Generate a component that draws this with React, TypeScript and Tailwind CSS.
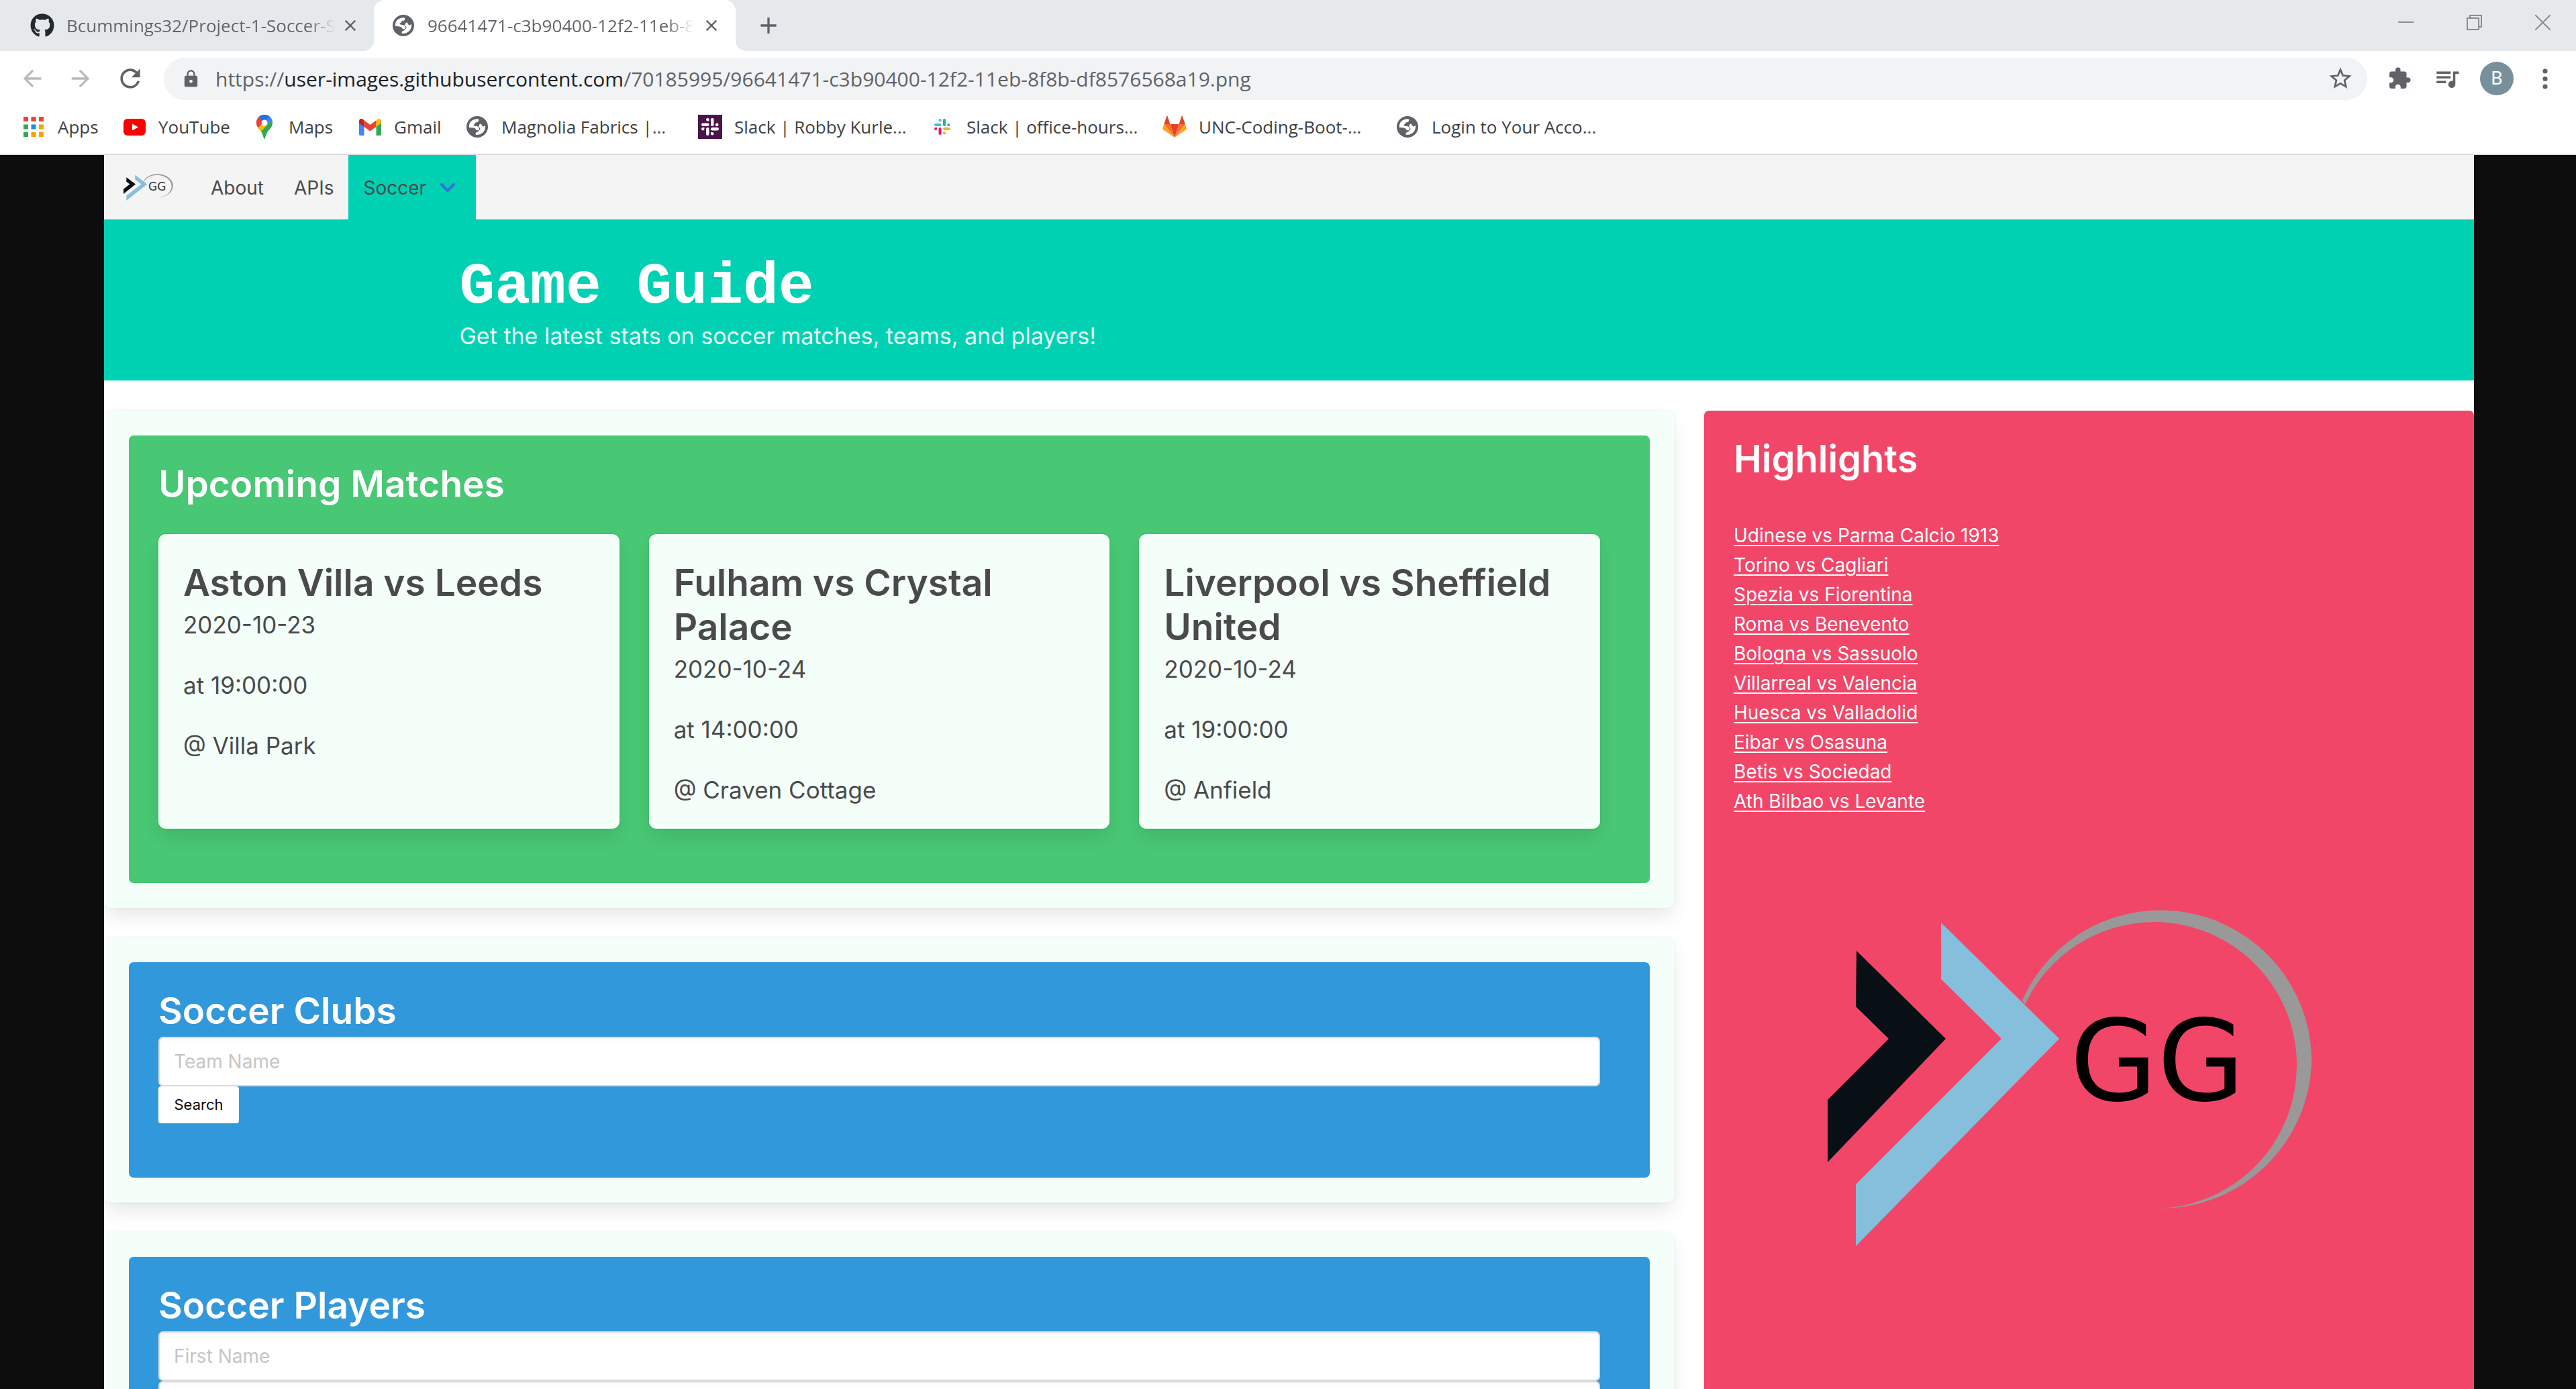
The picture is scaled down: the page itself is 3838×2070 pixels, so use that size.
import React from "react";
import { FaGithub } from "react-icons/fa";
import {
  MdQueueMusic,
  MdStarOutline,
  MdExtension,
  MdLock,
  MdRefresh,
  MdArrowBack,
  MdArrowForward,
  MdClose,
  MdAdd,
} from "react-icons/md";

const GlobeIcon = () => (
  <svg viewBox="0 0 32 32" className="size-8" aria-hidden="true">
    <circle cx="16" cy="16" r="16" fill="#5f6368" />
    <path
      fill="#fff"
      d="M4 17C3 9 9 4 17 4.200C18.500 4.500 19 7 17 8.500C16 9.300 13.500 9 13 10.500C12.700 12 10 12.500 10.500 14C11 15 17 14.500 18 16.500C19 18.500 20 20 18 21C15 22 14 20.500 13 18.500C11 17 6 17.500 4 17Z"
    />
    <path
      fill="#fff"
      d="M28 14C29 22 23 28.500 14 28C13 26 13.500 24.500 15.500 24C18 23.500 18 21.500 20 20.500C21.500 19.500 20 17 18 16C20 14 18 12 21 11.500C23 12 23 15.500 25 15.500C26.500 15.500 27 14 28 14Z"
    />
  </svg>
);

const AppsIcon = () => (
  <svg viewBox="0 0 30 30" className="size-[30px]" aria-hidden="true">
    {[
      ["#ea4335", "#ea4335", "#ea4335"],
      ["#34a853", "#1e88e5", "#f4a300"],
      ["#34a853", "#f4a300", "#f4a300"],
    ].map((row, r) =>
      row.map((fill, c) => (
        <rect key={`${r}-${c}`} x={c * 11.5} y={r * 11.5} width="7" height="7" fill={fill} />
      )),
    )}
  </svg>
);

const YouTubeIcon = () => (
  <svg viewBox="0 0 33 25" className="h-[25px] w-[33px]" aria-hidden="true">
    <rect width="33" height="25" rx="6" fill="#f00" />
    <path d="M13 7.500L22 12.500L13 17.500Z" fill="#fff" />
  </svg>
);

const MapsIcon = () => (
  <svg viewBox="0 0 24 36" className="h-9 w-6" aria-hidden="true">
    <clipPath id="pin">
      <path d="M12 0C5 0 0 5 0 12C0 18 4 21 7 25C10 29 11 36 12 36C13 36 14 29 17 25C20 21 24 18 24 12C24 5 19 0 12 0Z" />
    </clipPath>
    <g clipPath="url(#pin)">
      <rect width="24" height="36" fill="#34a853" />
      <path d="M0 20L18 0L24 7L5 29L-2 24Z" fill="#fbbc04" />
      <path d="M0 6L6 3L12 9L3 19L-3 14Z" fill="#ea4335" />
      <path d="M3 3L14 -3L20 3L12 11Z" fill="#1a73e8" />
      <path d="M12 11L20 2L26 8L22 14L12 12Z" fill="#4285f4" />
      <path d="M23 8C26 18 18 22 14 27L12 38L5 27L17 14Z" fill="#34a853" />
    </g>
    <circle cx="12" cy="12" r="4.500" fill="#fff" />
  </svg>
);

const GmailIcon = () => (
  <svg viewBox="0 0 33 25" className="h-[25px] w-[33px]" aria-hidden="true">
    <path d="M0 4V22.500Q0 25 2.500 25H7.500V9Z" fill="#4285f4" />
    <path d="M33 4V22.500Q33 25 30.500 25H25.500V9Z" fill="#34a853" />
    <path d="M7.500 2.200L16.500 9L25.500 2.200V12L16.500 18.500L7.500 12Z" fill="#ea4335" />
    <path d="M0 3.500C0 0 3.500 -1 6 1L7.500 2.200V12L0 6.500Z" fill="#c5221f" />
    <path d="M33 3.500C33 0 29.500 -1 27 1L25.500 2.200V12L33 6.500Z" fill="#fbbc04" />
  </svg>
);

const SlackMark = ({ colors }: { colors: string[] }) => (
  <>
    <g fill={colors[0]}>
      <rect x="0" y="7.500" width="11.500" height="4.500" rx="2.200" />
      <path d="M9.300 0a2.200 2.200 0 0 1 2.200 2.200V4.500H9.300A2.200 2.200 0 0 1 9.300 0Z" />
    </g>
    <g fill={colors[1]}>
      <rect x="14" y="0" width="4.500" height="12" rx="2.200" />
      <path d="M25.500 9.700a2.200 2.200 0 0 1-2.200 2.300H21V9.700A2.200 2.200 0 0 1 25.500 9.700Z" />
    </g>
    <g fill={colors[2]}>
      <rect x="14" y="14" width="12" height="4.500" rx="2.200" />
      <path d="M16.200 25.500a2.200 2.200 0 0 1-2.200-2.200V21h2.200A2.200 2.200 0 0 1 16.200 25.500Z" />
    </g>
    <g fill={colors[3]}>
      <rect x="7" y="14" width="4.500" height="12" rx="2.200" />
      <path d="M0 16.200a2.200 2.200 0 0 1 2.200-2.200h2.300v2.200A2.200 2.200 0 0 1 0 16.200Z" />
    </g>
  </>
);

const SlackTileIcon = () => (
  <svg viewBox="0 0 36 36" className="size-9" aria-hidden="true">
    <rect width="36" height="36" fill="#4a154b" />
    <g transform="translate(5 5)">
      <SlackMark colors={["#fff", "#fff", "#fff", "#fff"]} />
    </g>
  </svg>
);

const SlackIcon = () => (
  <svg viewBox="0 0 26 26" className="size-6" aria-hidden="true">
    <SlackMark colors={["#36c5f0", "#2eb67d", "#ecb22e", "#e01e5a"]} />
  </svg>
);

const GitLabIcon = () => (
  <svg viewBox="0 0 36 34" className="h-[34px] w-9" aria-hidden="true">
    <path d="M18 33L24.600 13H11.400Z" fill="#e24329" />
    <path d="M18 33L11.400 13H2.200Z" fill="#fc6d26" />
    <path d="M2.200 13L0.200 19Q-0.200 20.500 1 21.300L18 33Z" fill="#fca326" />
    <path d="M2.200 13H11.400L7.500 1Q7 0 6.400 1Z" fill="#e24329" />
    <path d="M18 33L24.600 13H33.800Z" fill="#fc6d26" />
    <path d="M33.800 13L35.800 19Q36.200 20.500 35 21.300L18 33Z" fill="#fca326" />
    <path d="M33.800 13H24.600L28.500 1Q29 0 29.600 1Z" fill="#e24329" />
  </svg>
);

const LogoMark = ({ className }: { className: string }) => (
  <svg viewBox="0 0 722 506" preserveAspectRatio="none" className={className} aria-hidden="true">
    <path
      fill="#999"
      d="M290 139A225 225 0 0 1 721 225A225 225 0 0 1 495 449A213.500 213.500 0 0 0 699 233A213.500 213.500 0 0 0 491 22A213.500 213.500 0 0 0 294 145Z"
    />
    <path fill="#080f15" d="M43 65L176 196L0 380V287L91 196L42 148Z" />
    <path fill="#86bfdc" d="M169 23L345 196L42 505V413L259 196L169 107Z" />
  </svg>
);

const bookmarks = [
  { label: "Apps", icon: <AppsIcon />, width: "w-[150px]" },
  { label: "YouTube", icon: <YouTubeIcon />, width: "w-[194px]" },
  { label: "Maps", icon: <MapsIcon />, width: "w-[157px]" },
  { label: "Gmail", icon: <GmailIcon />, width: "w-40" },
  { label: "Magnolia Fabrics |...", icon: <GlobeIcon />, width: "w-[347px]" },
  { label: "Slack | Robby Kurle...", icon: <SlackTileIcon />, width: "w-[346px]" },
  { label: "Slack | office-hours...", icon: <SlackIcon />, width: "w-[346px]" },
  { label: "UNC-Coding-Boot-...", icon: <GitLabIcon />, width: "w-[347px]" },
  { label: "Login to Your Acco...", icon: <GlobeIcon />, width: "w-[347px]" },
];

const matches = [
  { teams: "Aston Villa vs Leeds", date: "2020-10-23", time: "at 19:00:00", venue: "@ Villa Park" },
  { teams: "Fulham vs Crystal Palace", date: "2020-10-24", time: "at 14:00:00", venue: "@ Craven Cottage" },
  { teams: "Liverpool vs Sheffield United", date: "2020-10-24", time: "at 19:00:00", venue: "@ Anfield" },
];

const highlights = [
  "Udinese vs Parma Calcio 1913",
  "Torino vs Cagliari",
  "Spezia vs Fiorentina",
  "Roma vs Benevento",
  "Bologna vs Sassuolo",
  "Villarreal vs Valencia",
  "Huesca vs Valladolid",
  "Eibar vs Osasuna",
  "Betis vs Sociedad",
  "Ath Bilbao vs Levante",
];

const TabStrip = () => (
  <div className="flex h-[76px] items-stretch bg-[#e5e9ec] text-[26px] text-[#5f6368]">
    <div className="flex w-[557px] items-center pl-[45px] pr-[21px]">
      <FaGithub className="size-9 shrink-0 text-[#24292e]" />
      <span className="ml-[18px] w-[400px] overflow-hidden whitespace-nowrap bg-linear-to-r from-[#5f6368] from-90% to-transparent bg-clip-text text-transparent">
        Bcummings32/Project-1-Soccer-S
      </span>
      <button type="button" aria-label="Close tab" className="ml-auto">
        <MdClose className="size-7 text-[#5f6368]" />
      </button>
    </div>
    <div className="relative flex w-[539px] items-center rounded-t-[16px] bg-white pl-[28px] pr-[22px]">
      <span className="absolute -left-4 bottom-0 size-4 bg-[radial-gradient(circle_at_0_0,transparent_16px,#fff_16px)]" />
      <span className="absolute -right-4 bottom-0 size-4 bg-[radial-gradient(circle_at_100%_0,transparent_16px,#fff_16px)]" />
      <GlobeIcon />
      <span className="ml-5 w-[396px] overflow-hidden whitespace-nowrap bg-linear-to-r from-[#5f6368] from-90% to-transparent bg-clip-text text-transparent">
        96641471-c3b90400-12f2-11eb-8f8b
      </span>
      <button type="button" aria-label="Close tab" className="ml-auto">
        <MdClose className="size-7 text-[#5f6368]" />
      </button>
    </div>
    <button type="button" aria-label="New tab" className="ml-[29px]">
      <MdAdd className="size-10 text-[#5f6368]" />
    </button>
    <div className="ml-auto flex h-[66px] items-center gap-[79px] pr-[38px] text-[#8c8c8c]">
      <button type="button" aria-label="Minimize">
        <svg viewBox="0 0 23 23" className="size-[23px]"><path d="M0 11H23" stroke="currentColor" strokeWidth="2" /></svg>
      </button>
      <button type="button" aria-label="Restore">
        <svg viewBox="0 0 23 23" className="size-[23px]" fill="none" stroke="currentColor" strokeWidth="2">
          <path d="M1 5H18V22H1ZM5 5V1H22V18H18" />
        </svg>
      </button>
      <button type="button" aria-label="Close window">
        <svg viewBox="0 0 23 23" className="size-[23px]"><path d="M0 0L23 23M23 0L0 23" stroke="currentColor" strokeWidth="2" /></svg>
      </button>
    </div>
  </div>
);

const Toolbar = () => (
  <div className="flex h-[82px] items-center bg-white pl-7 pr-[42px] text-[#5f6368]">
    <button type="button" aria-label="Back" className="text-[#bababa]"><MdArrowBack className="size-10" /></button>
    <button type="button" aria-label="Forward" className="ml-8 text-[#bababa]"><MdArrowForward className="size-10" /></button>
    <button type="button" aria-label="Reload" className="ml-8"><MdRefresh className="size-[44px]" /></button>
    <div className="ml-7 flex h-[63px] flex-1 items-center rounded-full bg-[#f1f3f5] pl-[26px] pr-5">
      <MdLock className="size-[29px]" />
      <span className="ml-[22px] whitespace-nowrap text-[30px]">
        https://<span className="text-[#202124]">user-images.githubusercontent.com</span>
        /70185995/96641471-c3b90400-12f2-11eb-8f8b-df8576568a19.png
      </span>
      <button type="button" aria-label="Bookmark this page" className="ml-auto"><MdStarOutline className="size-10" /></button>
    </div>
    <button type="button" aria-label="Extensions" className="ml-[30px]"><MdExtension className="size-9" /></button>
    <button type="button" aria-label="Media controls" className="ml-8"><MdQueueMusic className="size-[42px]" /></button>
    <button type="button" aria-label="Profile" className="ml-7 flex size-[50px] items-center justify-center rounded-full bg-[#78909c] font-[Roboto] text-[28px] text-white">B</button>
    <button type="button" aria-label="Menu" className="ml-[43px]">
      <svg viewBox="0 0 8 31" className="h-[31px] w-2" fill="currentColor">
        <circle cx="4" cy="4" r="3.600" /><circle cx="4" cy="15.500" r="3.600" /><circle cx="4" cy="27" r="3.600" />
      </svg>
    </button>
  </div>
);

const BookmarksBar = () => (
  <nav className="flex h-[73px] items-center border-b-2 border-[#dadce0] bg-white pb-[9px] pl-8 text-[26px] text-[#3c4043]">
    {bookmarks.map((b) => (
      <a key={b.label} href="#" className={`flex h-9 shrink-0 items-center gap-[18px] whitespace-nowrap ${b.width}`}>
        <span className="flex w-9 shrink-0 justify-center">{b.icon}</span>
        {b.label}
      </a>
    ))}
  </nav>
);

const SiteNav = () => (
  <nav className="flex h-24 items-stretch bg-[#f4f4f4] text-[28px] text-[#4a4a4a]">
    <a href="#" aria-label="Game Guide home" className="relative flex w-[136px] items-center pl-[29px]">
      <LogoMark className="h-10 w-[74px]" />
      <span className="absolute left-[66px] top-[37px] font-['DejaVu_Sans'] text-[17px] leading-5 text-[#333]">GG</span>
    </a>
    <a href="#" className="flex items-center px-[23px] pt-0.5">About</a>
    <a href="#" className="flex items-center px-[22px] pt-0.5">APIs</a>
    <button type="button" className="flex w-[190px] items-center justify-between bg-[#00d1b2] pl-[22px] pr-[30px] pt-0.5">
      Soccer
      <svg viewBox="0 0 24 16" className="h-4 w-6" fill="none" stroke="#3273dc" strokeWidth="4" strokeLinecap="round" strokeLinejoin="round" aria-hidden="true">
        <path d="M3 3L12 12L21 3" />
      </svg>
    </button>
  </nav>
);

const Panel = ({ title, color, children }: { title: string; color: string; children: React.ReactNode }) => (
  <section className="rounded-[11px] bg-[#f5fffa] p-[37px] shadow-[0_15px_29px_-4px_rgba(10,10,10,0.1),0_0_0_2px_rgba(10,10,10,0.02)]">
    <div className={`rounded-[7px] pt-[39px] pb-[81px] pl-11 pr-[74px] ${color}`}>
      <h2 className="text-[55px] font-semibold leading-[66px] text-white">{title}</h2>
      {children}
    </div>
  </section>
);

const TextField = ({ placeholder }: { placeholder: string }) => (
  <input
    type="text"
    aria-label={placeholder}
    placeholder={placeholder}
    className="block h-[74px] w-full rounded-[7px] border-2 border-[#dbdbdb] bg-white px-[21px] text-[28px] text-[#363636] shadow-[inset_0_2px_4px_rgba(10,10,10,0.05)] placeholder:text-[#c6c6c6]"
  />
);

const SearchButton = () => (
  <button type="button" className="block h-[55px] w-[120px] rounded-[4px] bg-white text-[22px] text-[#0a0a0a]">
    Search
  </button>
);

export default function App() {
  return (
    <div className="h-screen overflow-hidden bg-[#0d0d0d] font-['Open_Sans',sans-serif]">
      <header>
        <TabStrip />
        <Toolbar />
        <BookmarksBar />
      </header>
      <div className="ml-[155px] mr-[152px] overflow-hidden bg-white font-[Inter,sans-serif]">
        <SiteNav />
        <div className="bg-[#00d1b2] text-white">
          <div className="mx-auto max-w-[2472px] pb-10 pt-[53px]">
            <h1 className="font-['Liberation_Mono',monospace] text-[88px] font-bold leading-[95px]">Game Guide</h1>
            <p className="text-[34px] leading-[52px] text-white/90">Get the latest stats on soccer matches, teams, and players!</p>
          </div>
        </div>
        <main className="grid grid-cols-[2340fr_1147fr] gap-11 pt-[45px]">
          <div className="flex flex-col gap-11">
            <Panel title="Upcoming Matches" color="bg-[#48c774]">
              <div className="mt-[42px] grid grid-cols-3 gap-11">
                {matches.map((m) => (
                  <article key={m.teams} className="rounded-[11px] bg-[#f5fffa] px-[37px] pb-[35px] pt-[39px] text-[#4a4a4a] shadow-[0_15px_29px_-4px_rgba(10,10,10,0.1),0_0_0_2px_rgba(10,10,10,0.02)]">
                    <h3 className="text-[55px] font-semibold leading-[66px]">{m.teams}</h3>
                    <div className="mt-2 flex flex-col gap-[45px] text-[35px] leading-[45px]">
                      <p>{m.date}</p>
                      <p>{m.time}</p>
                      <p>{m.venue}</p>
                    </div>
                  </article>
                ))}
              </div>
            </Panel>
            <Panel title="Soccer Clubs" color="bg-[#3298dc]">
              <form className="mt-1.5">
                <TextField placeholder="Team Name" />
                <SearchButton />
              </form>
            </Panel>
            <Panel title="Soccer Players" color="bg-[#3298dc]">
              <form className="mt-1.5">
                <TextField placeholder="First Name" />
                <TextField placeholder="Last Name" />
                <SearchButton />
              </form>
            </Panel>
          </div>
          <aside className="rounded-[7px] bg-[#f14668] pl-11 pr-[74px] pt-[39px] text-white">
            <h2 className="text-[56px] font-semibold leading-[66px]">Highlights</h2>
            <ul className="mt-[59px] text-[28px] leading-[44px]">
              {highlights.map((h) => (
                <li key={h}>
                  <a href="#" className="underline decoration-2 underline-offset-4">{h}</a>
                </li>
              ))}
            </ul>
            <div className="relative ml-[140px] mt-[136px] w-[722px]">
              <LogoMark className="h-[506px] w-[722px]" />
              <span className="absolute left-[361px] top-[130px] font-['DejaVu_Sans'] text-[168px] leading-[200px] text-black">GG</span>
            </div>
          </aside>
        </main>
      </div>
    </div>
  );
}
